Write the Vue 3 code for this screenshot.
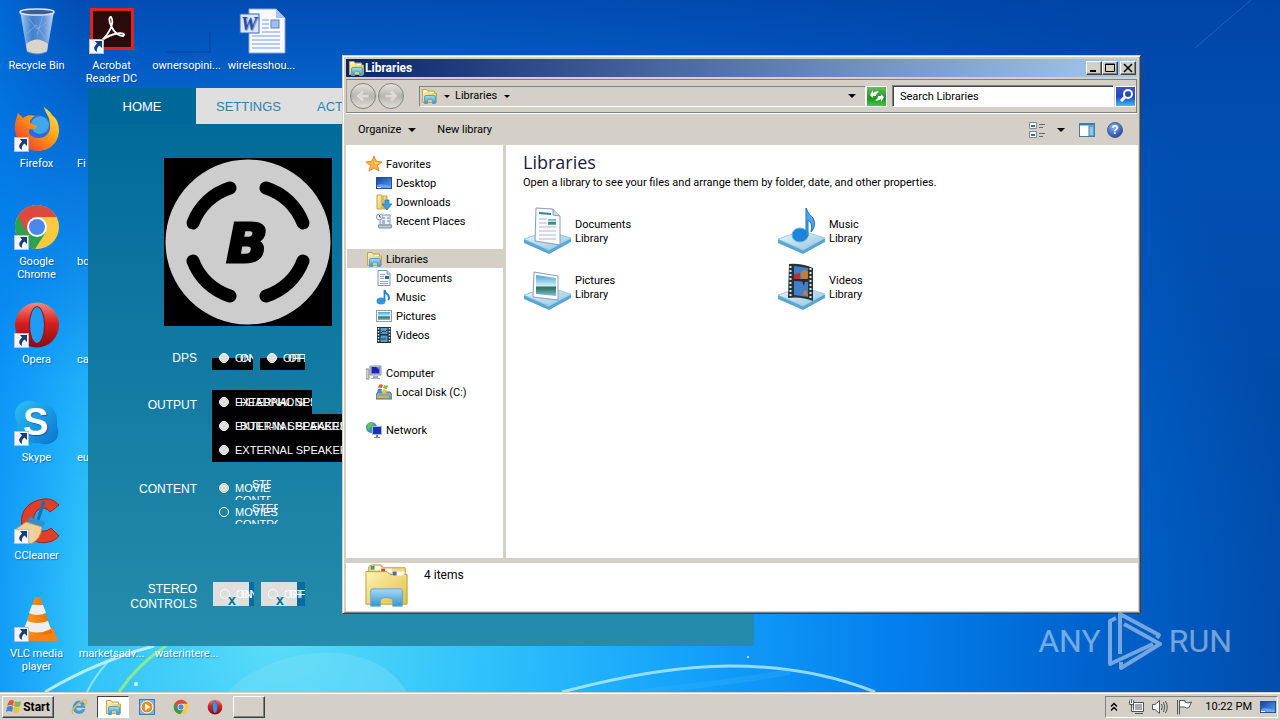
<template>
  <div class="screen">
    <svg class="sprite" width="0" height="0" aria-hidden="true">
      <defs>
        <linearGradient id="gGlass" x1="0" x2="1" y1="0" y2="0">
          <stop offset="0" stop-color="#cfe2f6" stop-opacity=".85" />
          <stop offset=".35" stop-color="#5f8fcf" stop-opacity=".7" />
          <stop offset=".7" stop-color="#7fa8dc" stop-opacity=".75" />
          <stop offset="1" stop-color="#dfeaf8" stop-opacity=".9" />
        </linearGradient>
        <linearGradient id="gFolder" x1="0" x2="1" y1="0" y2="1">
          <stop offset="0" stop-color="#fdf3b4" />
          <stop offset="1" stop-color="#e3bd45" />
        </linearGradient>
        <linearGradient id="gBlue" x1="0" x2="0" y1="0" y2="1">
          <stop offset="0" stop-color="#a9dbf6" />
          <stop offset="1" stop-color="#3593d0" />
        </linearGradient>
        <linearGradient id="gScreen" x1="0" x2="1" y1="0" y2="1">
          <stop offset="0" stop-color="#123fa8" />
          <stop offset="1" stop-color="#5aa4ee" />
        </linearGradient>
        <linearGradient id="gSky" x1="0" x2="0" y1="0" y2="1">
          <stop offset="0" stop-color="#4fa3dc" />
          <stop offset=".5" stop-color="#c8ebf2" />
          <stop offset=".6" stop-color="#2f6d5b" />
          <stop offset="1" stop-color="#7cc3d8" />
        </linearGradient>
        <linearGradient id="gFox" x1="1" x2="0" y1="0" y2="1">
          <stop offset="0" stop-color="#fff04a" />
          <stop offset=".45" stop-color="#ff9a16" />
          <stop offset="1" stop-color="#e5233c" />
        </linearGradient>
        <linearGradient id="gOpera" x1="0" x2="0" y1="0" y2="1">
          <stop offset="0" stop-color="#f38a80" />
          <stop offset=".45" stop-color="#d8201f" />
          <stop offset="1" stop-color="#8c0a0c" />
        </linearGradient>
        <linearGradient id="gSkype" x1="0" x2="1" y1="0" y2="1">
          <stop offset="0" stop-color="#2cc0f5" />
          <stop offset="1" stop-color="#0a73cf" />
        </linearGradient>
        <linearGradient id="gCone" x1="0" x2="1" y1="0" y2="0">
          <stop offset="0" stop-color="#ff9c2a" />
          <stop offset="1" stop-color="#e96a00" />
        </linearGradient>
        <linearGradient id="gTray" x1="0" x2="1" y1="0" y2="1">
          <stop offset="0" stop-color="#f1f8fc" />
          <stop offset="1" stop-color="#8fc2e0" />
        </linearGradient>
        <radialGradient id="gHelp" cx=".4" cy=".3" r=".8">
          <stop offset="0" stop-color="#8fb4ee" />
          <stop offset="1" stop-color="#1538a2" />
        </radialGradient>
      </defs>

      <symbol id="bin" viewBox="0 0 48 48">
        <path d="M7 4L14 45Q24 50 34 45L41 4Z" fill="url(#gGlass)" />
        <path d="M13 37Q24 28 35 37L34 44Q24 49 14 44Z" fill="#d9d4cc" />
        <path d="M16 12l8 10 9-6M15 26l8-8 10 14M30 8l-6 20" stroke="#a9c8ef" fill="none" opacity=".4" />
        <ellipse cx="24" cy="5" rx="17" ry="3" fill="#3b5d94" stroke="#dde8f5" stroke-width="1.5" />
      </symbol>
      <symbol id="acrobat" viewBox="0 0 48 48">
        <rect x="2" y="1" width="44" height="42" fill="#e2231a" />
        <rect x="5" y="4" width="38" height="36" fill="#2b0a0c" />
        <path d="M13 34C21 27 27 16 23 10C18 10 25 29 35 29C40 26 27 23 13 34" fill="none" stroke="#fff" stroke-width="1.8" />
      </symbol>
      <symbol id="blank" viewBox="0 0 48 48">
        <path d="M3 45H47V25" fill="none" stroke="#0a3478" opacity=".55" />
      </symbol>
      <symbol id="word" viewBox="0 0 48 48">
        <path d="M11 2H38L47 11V46H11Z" fill="#f6f9ff" stroke="#8aa6d8" />
        <path d="M38 2V11H47Z" fill="#aac1ee" />
        <path d="M24 13h7M24 17h7M24 21h7M24 25h18M14 29h28M14 33h28M14 37h28M14 41h28" stroke="#7d9cd4" />
        <rect x="33" y="13" width="8" height="8" fill="#a5bde9" stroke="#5f81c7" />
        <rect x="2" y="7" width="19" height="19" fill="#dbe6fa" stroke="#3a62b8" />
        <text x="3" y="23" class="svg-serif" font-size="18" font-weight="700" font-style="italic" fill="#214fae">W</text>
      </symbol>
      <symbol id="firefox" viewBox="0 0 48 48">
        <circle cx="24" cy="26" r="16" fill="#2c6bd8" />
        <circle cx="27" cy="20" r="9" fill="#3fa7ea" />
        <path d="M31 2C32 8 37 11 37 20C38 28 32 34 24 33C17 32 14 27 17 24C20 25 23 24 24 21L17 18C17 14 20 12 22 11C16 9 12 11 10 13L5 8C3 15 1 18 2 26C4 38 14 46 25 46C37 46 46 37 46 25C46 17 42 12 39 10C38 7 33 4 31 2Z" fill="url(#gFox)" />
      </symbol>
      <symbol id="chrome" viewBox="0 0 48 48">
        <circle cx="24" cy="24" r="22" fill="#fbc93d" />
        <path d="M24 24L5 13A22 22 0 0 0 22 46L33 29Z" fill="#2da150" />
        <path d="M5 13A22 22 0 0 1 43 13L43 14H24L14 30Z" fill="#dc4a3d" />
        <circle cx="24" cy="24" r="10" fill="#fff" />
        <circle cx="24" cy="24" r="8" fill="#4a88ee" />
      </symbol>
      <symbol id="opera" viewBox="0 0 48 48">
        <ellipse cx="24" cy="24" rx="22" ry="22.5" fill="url(#gOpera)" />
        <ellipse class="hole" cx="24" cy="24" rx="7.5" ry="18.5" stroke="#8c1414" />
      </symbol>
      <symbol id="skype" viewBox="0 0 48 48">
        <path d="M4 8Q12-2 24 4Q46 4 44 26Q48 38 40 43Q34 47 26 44Q4 46 4 24Q0 14 4 8Z" fill="url(#gSkype)" />
        <text x="10" y="36" class="svg-sans" font-size="38" font-weight="700" fill="#fff">S</text>
      </symbol>
      <symbol id="ccleaner" viewBox="0 0 48 48">
        <path d="M46 8Q38-1 26 3C10 7 5 22 11 34C17 48 38 49 46 39L38 31Q30 38 23 30Q17 18 26 12Q32 9 37 15Z" fill="#de3f28" stroke="#9e2318" />
        <path d="M31 4L25 23" stroke="#186fb2" stroke-width="3" />
        <path d="M17 20L32 25L30 31L13 27Z" fill="#2a93cf" />
        <path d="M13 25L29 30Q28 42 18 47Q8 42 3 32Z" fill="#f1cf98" stroke="#c89452" />
      </symbol>
      <symbol id="vlc" viewBox="0 0 48 48">
        <path d="M11 33H40L45 46H3Z" fill="#f58216" />
        <path d="M22 2H27L39 38Q24 44 10 38Z" fill="url(#gCone)" />
        <path d="M19 10H30L33 18Q24 22 16 18ZM14 26Q24 30 35 26L38 34Q24 41 11 34Z" fill="#eee" />
      </symbol>
      <symbol id="folder" viewBox="0 0 48 48">
        <path d="M5 4Q6 2 8 2H18L20 5H43V16H5Z" fill="#f2dc80" stroke="#bd9b38" />
        <rect x="7" y="3" width="10" height="4" fill="#fff" />
        <rect x="7" y="3" width="4" height="4" fill="#4d9b57" />
        <rect x="17" y="6" width="12" height="4" fill="#fff" />
        <rect x="18" y="6" width="4" height="4" fill="#d6432f" />
        <path d="M2 9H24L27 12H45V43H2Z" fill="url(#gFolder)" stroke="#c49d36" />
        <rect x="30" y="9" width="12" height="4" fill="#fff" />
        <rect x="30" y="9" width="4" height="4" fill="#4268b0" />
        <path d="M7 29Q7 27 9 27H38Q40 27 40 29V45H30V38Q23 34 17 38V45H7Z" fill="url(#gBlue)" stroke="#5aa8d6" />
      </symbol>
      <!-- simplified folder for 16px use -->
      <symbol id="folder-small" viewBox="0 0 16 16">
        <path d="M1.500 1.500H6L7 3H13.500V5H15.500V14.500H1.500Z" fill="url(#gFolder)" stroke="#c9a544" />
        <path d="M3 3h3M9 4.500h4" stroke="#fff" />
        <path d="M3.500 15.500V9Q3.500 7.500 5 7.500H12Q14.500 7.500 14.500 9V15.500H11.500V12Q9 10 6.500 12V15.500Z" fill="url(#gBlue)" stroke="#4fa4d4" />
      </symbol>
      <symbol id="star" viewBox="0 0 16 16">
        <path d="M8 0L10 5L16 6L11.500 9.500L13 15L8 12L3 15L4.500 9.500L0 6L6 5Z" fill="#ffb437" stroke="#dc7418" stroke-width=".8" />
        <path d="M8 3L9 6L13 7L9 8Z" fill="#fff0a0" />
      </symbol>
      <symbol id="desktop" viewBox="0 0 16 16">
        <rect x=".5" y="2.500" width="15" height="11" fill="url(#gScreen)" stroke="#23508e" />
        <path d="M1 10Q7 8 15 12V13H1Z" fill="#79c0f5" opacity=".6" />
        <path d="M1 12.500H5" stroke="#fff" />
      </symbol>
      <symbol id="downloads" viewBox="0 0 16 16">
        <path d="M1 1H6V15H1ZM7 2H11V15H7Z" fill="url(#gFolder)" stroke="#c6a03d" />
        <path d="M9 6H13V10H16L11 16L6 10H9Z" fill="#3aa2e2" stroke="#1b6cb0" stroke-width=".7" />
      </symbol>
      <symbol id="recent" viewBox="0 0 16 16">
        <path d="M4 2H14V12H4Z" fill="#e8f1f8" stroke="#8498a8" />
        <path d="M6 5h3M11 5h2M6 8h3M11 8h2M6 10h3" stroke="#4486b4" />
        <path d="M2 12H16L15 15H3Z" fill="#bccad4" stroke="#80909c" />
        <circle cx="3.500" cy="4" r="3" fill="#fff" stroke="#8798a4" />
        <path d="M3.500 2V4H5" stroke="#456" fill="none" />
      </symbol>
      <symbol id="document" viewBox="0 0 16 16">
        <path d="M2 .5H11L14 3.500V15.500H2Z" fill="#fbfdff" stroke="#8096b2" />
        <path d="M11 .5V4H14" fill="#cfdcec" stroke="#8096b2" />
        <path d="M4 4.500h5M4 6.500h4M4 8.500h4M4 11.500h8M4 13.500h8" stroke="#8aa4c8" />
        <rect x="9" y="6" width="4" height="3" fill="#315f9f" />
      </symbol>
      <symbol id="music" viewBox="0 0 16 16">
        <ellipse cx="5" cy="12" rx="4.500" ry="3.500" fill="#2c98df" />
        <path d="M8.500 12V1Q9 4 12 6Q14 9 12 11" fill="none" stroke="#2582c8" stroke-width="1.800" />
      </symbol>
      <symbol id="picture" viewBox="0 0 16 16">
        <rect x=".5" y="2.500" width="15" height="11" fill="#fff" stroke="#8aa0b0" />
        <rect x="2" y="4" width="12" height="8" fill="url(#gSky)" />
      </symbol>
      <symbol id="video" viewBox="0 0 16 16">
        <rect x="1" y="0" width="14" height="16" fill="#22303c" />
        <path d="M2.500 1V16M13.500 1V16" stroke="#e6eef2" stroke-width="1.500" stroke-dasharray="1.500 1.500" />
        <path d="M4.500 1H11.500V7H4.500ZM4.500 8.500H11.500V15H4.500Z" fill="#579cc8" />
        <path d="M5 6l2-2 2 1 2-2M5 12h5" stroke="#1f425e" fill="none" />
      </symbol>
      <symbol id="computer" viewBox="0 0 16 16">
        <path d="M0 4H3V14H0Z" fill="#cfd4d8" stroke="#8a9196" />
        <path d="M4 1H15V10H4Z" fill="#c9cfd8" stroke="#8a93a4" />
        <path d="M5.500 2H13.500V8.500H5.500Z" fill="#1b27b4" />
        <path d="M10 2H13.500V5Z" fill="#6a86ee" />
        <path d="M7 11h5v2h2v1H5v-1h2Z" fill="#aab0b6" />
      </symbol>
      <symbol id="disk" viewBox="0 0 16 16">
        <path d="M0 11L2 8H14L16 11V15H0Z" fill="#8fa6ae" stroke="#586e78" />
        <path d="M1 12H12V14H1Z" fill="#cfb64a" />
        <circle cx="14" cy="13" r="1" fill="#3fd13a" />
        <path d="M3 1Q5-.5 7 1L6 4Q4 3 2 4Z" fill="#e8592b" />
        <path d="M8 1Q10 2 12 1L11 5Q9 5 7 4Z" fill="#7abf3e" />
        <path d="M2 5Q4 4 6 5L5 9Q3 8 1 9Z" fill="#3a8bdc" />
        <path d="M7 5Q9 6 11 6L10 9Q8 10 6 9Z" fill="#f7c331" />
      </symbol>
      <symbol id="network" viewBox="0 0 16 16">
        <circle cx="5.500" cy="5.500" r="5.500" fill="#3d93cf" />
        <path d="M2 2Q6-1 8 2L5 5L3 8L1 6ZM6 6L9 5V9Z" fill="#63c25a" />
        <rect x="6.500" y="4.500" width="9" height="8" fill="#1c30c4" stroke="#a8b4d8" />
        <path d="M10 13h2v2h2v1H8v-1h2Z" fill="#6f80b4" />
      </symbol>
      <symbol id="tray-base" viewBox="0 0 48 48">
        <path d="M1 32L26 42L48 31V35L26 47L1 36Z" fill="#58a6d2" />
        <path d="M1 32L25 24L48 31L26 43Z" fill="url(#gTray)" stroke="#9bcbe4" />
      </symbol>
      <symbol id="lib-documents" viewBox="0 0 48 48">
        <use href="#tray-base" width="48" height="48" />
        <path d="M13 1L30 2L37 9V38L12 34Z" fill="#f8fbff" stroke="#8a9cb8" />
        <path d="M30 2V8L37 9" fill="#cddbea" stroke="#8a9cb8" />
        <path d="M16 6l12 1" stroke="#3f7d96" stroke-width="2" />
        <path d="M16 12h8M16 16h8M16 20h17M16 24h17M16 28h17M16 32h17" stroke="#b9b6cf" />
        <rect x="25" y="12" width="8" height="6" fill="url(#gSky)" />
      </symbol>
      <symbol id="lib-music" viewBox="0 0 48 48">
        <use href="#tray-base" width="48" height="48" />
        <ellipse cx="23" cy="28" rx="8" ry="7" fill="#1c84da" stroke="#63b6ee" />
        <path d="M29 29V1Q31 7 36 11Q40 19 34 25Q36 15 31 13V29Z" fill="#4aa8ea" stroke="#1c70ba" />
      </symbol>
      <symbol id="lib-pictures" viewBox="0 0 48 48">
        <use href="#tray-base" width="48" height="48" />
        <path d="M11 9L35 13V37L10 34Z" fill="#fff" stroke="#8d9cb0" />
        <path d="M13 12L33 15V33L13 31Z" fill="url(#gSky)" />
      </symbol>
      <symbol id="lib-videos" viewBox="0 0 48 48">
        <use href="#tray-base" width="48" height="48" />
        <path d="M12 1Q24 0 36 5V38Q24 33 11 35Z" fill="#26333a" />
        <path d="M13.500 3V34M33.500 5V36" stroke="#dfe8d8" stroke-width="2" stroke-dasharray="2 2" />
        <path d="M17 3L31 5V17L17 16ZM17 18L31 19V34L17 32Z" fill="#3f7fcb" />
        <path d="M17 11L23 10V16H17Z" fill="#b8302a" />
        <path d="M25 16Q22 7 28 7Q33 9 30 16ZM26 29Q30 24 31 33L26 32Z" fill="#c97a30" />
        <path d="M17 16H31V18H28L27 23L25 18H17Z" fill="#33222a" />
      </symbol>
      <symbol id="ie" viewBox="0 0 16 16">
        <path d="M12.500 8.500H4.500Q5 12 8 12Q10 12 11 10.500H14Q12 15 8 14.500Q2 14 2 8Q3 2 8 2Q14 2 14 8.500ZM5 7H11Q10 4 8 4Q5.500 4 5 7Z" fill="#3aa0e4" stroke="#2a86cc" stroke-width=".5" />
        <path d="M2 15Q-1 12 7 5Q13 0 15 1Q17 3 13 7" fill="none" stroke="#e9b93a" stroke-width="1.300" />
      </symbol>
      <symbol id="wmp" viewBox="0 0 16 16">
        <rect x=".5" y=".5" width="15" height="15" fill="#79b4e2" stroke="#3c7ab2" />
        <circle cx="8" cy="8" r="6" fill="#f18a1c" stroke="#fff" />
        <path d="M6 4.500L11.500 8L6 11.500Z" fill="#fff" />
      </symbol>
      <symbol id="flag-win" viewBox="0 0 16 16">
        <path d="M3 2Q6 0 8 2L7 7Q4 5 1 7Z" fill="#e4572a" />
        <path d="M9 2Q12 4 15 2L14 7Q11 9 8 7Z" fill="#7fbb42" />
        <path d="M1 8Q4 6 7 8L6 13Q3 11 0 13Z" fill="#3c86d4" />
        <path d="M8 8Q11 10 14 8L13 13Q10 15 7 13Z" fill="#f4c02f" />
      </symbol>
    </svg>

    <main class="desktop">
      <svg class="wallpaper" viewBox="0 0 1280 692" preserveAspectRatio="none" aria-hidden="true">
        <defs>
          <radialGradient id="wGlow" gradientUnits="userSpaceOnUse" cx="280" cy="640" r="1020">
            <stop offset="0" stop-color="#5adcf8" />
            <stop offset=".2" stop-color="#2fc2fa" />
            <stop offset=".4" stop-color="#14a2fb" />
            <stop offset=".6" stop-color="#0480ee" />
            <stop offset=".8" stop-color="#0062cc" />
            <stop offset="1" stop-color="#004ba8" />
          </radialGradient>
          <linearGradient id="wTop" x1="0" x2="0" y1="0" y2="1">
            <stop offset="0" stop-color="#0142a6" stop-opacity=".8" />
            <stop offset=".25" stop-color="#0153bc" stop-opacity=".45" />
            <stop offset=".55" stop-color="#0153bc" stop-opacity="0" />
          </linearGradient>
          <linearGradient id="wLeft" x1="0" x2="1" y1="0" y2="0">
            <stop offset="0" stop-color="#0084f4" stop-opacity=".5" />
            <stop offset="1" stop-color="#0084f4" stop-opacity="0" />
          </linearGradient>
        </defs>
        <rect width="1280" height="692" fill="url(#wGlow)" />
        <rect width="1280" height="692" fill="url(#wTop)" />
        <rect width="80" height="692" fill="url(#wLeft)" />
        <path d="M1195 48L1280 -25" stroke="#2f83d2" opacity=".5" />
        <path d="M45 692Q95 662 154 646" stroke="#c9f3ff" stroke-width="3" fill="none" opacity=".85" />
        <path d="M87 692Q98 670 116 654" stroke="#b4f0f4" stroke-width="2" fill="none" opacity=".7" />
        <path d="M119 692Q138 664 166 646" stroke="#9bf078" stroke-width="3" fill="none" opacity=".85" />
        <path d="M228 692C265 650 370 630 407 692Z" fill="#8ae4f8" opacity=".3" />
        <path d="M562 692Q660 666 730 666Q810 666 875 692" stroke="#b8ecff" stroke-width="3" fill="none" opacity=".8" />
        <path d="M640 692Q720 684 790 672" stroke="#4bbcff" stroke-width="6" fill="none" opacity=".2" />
        <circle cx="136" cy="684" r="2" fill="#d5f8ff" />
        <circle cx="748" cy="657" r="1" fill="#d5f8ff" />
      </svg>

      <ul class="shortcuts">
        <li v-for="s in shortcuts" :key="s.label" :class="{ covered: s.covered }">
          <a href="#" class="shortcut">
            <span class="shortcut-icon">
              <svg v-if="s.icon"><use :href="'#' + s.icon" /></svg>
              <svg v-if="s.link" class="arrow" viewBox="0 0 15 15">
                <rect x=".5" y=".5" width="14" height="14" fill="#f3f6fa" stroke="#b6bfca" />
                <path d="M6 2H13V9L10.500 6.500Q7 9 8 13Q2 10 8 4.500Z" fill="#173d7d" />
              </svg>
            </span>
            <span class="shortcut-label">{{ s.label }}</span>
          </a>
        </li>
      </ul>

      <section class="panel">
        <nav class="panel-nav">
          <a href="#" class="active">HOME</a>
          <a href="#">SETTINGS</a>
          <a href="#">ACTIONS</a>
        </nav>
        <svg class="logo" viewBox="0 0 168 168">
          <rect width="168" height="168" />
          <circle cx="84" cy="84" r="82.500" fill="#cdcdcd" />
          <g fill="none" stroke="#000" stroke-width="13" stroke-linecap="round">
            <path d="M29 65A58 58 0 0 1 66 30" />
            <path d="M102 30A58 58 0 0 1 139 65" />
            <path d="M139 103A58 58 0 0 1 102 138" />
            <path d="M66 138A58 58 0 0 1 29 103" />
          </g>
          <text x="83" y="104" text-anchor="middle" class="logo-letter">B</text>
        </svg>
        <div class="settings">
          <fieldset v-for="g in groups" :key="g.title" :class="['group', g.kind]">
            <legend>{{ g.title }}</legend>
            <div class="options">
              <label v-for="(o, i) in g.options" :key="i" class="option">
                <input type="radio" :name="g.kind" :checked="i === 0" />
                <span>{{ o.text }}</span>
                <span class="ghost">{{ o.ghost }}</span>
                <span v-if="o.below" class="below">{{ o.below }}</span>
                <b v-if="g.kind === 'stereo'">x</b>
              </label>
            </div>
          </fieldset>
        </div>
      </section>

      <section class="window">
        <header class="titlebar">
          <svg class="i16"><use href="#folder-small" /></svg>
          <h1>Libraries</h1>
          <button class="cap" aria-label="Minimize"><svg viewBox="0 0 12 10"><path d="M2 8H8" stroke="#000" stroke-width="2" /></svg></button>
          <button class="cap" aria-label="Maximize"><svg viewBox="0 0 12 10"><path d="M1.500 1V8.500H10.500V1ZM1 1.500H11" stroke="#000" fill="none" /></svg></button>
          <button class="cap close" aria-label="Close"><svg viewBox="0 0 12 10"><path d="M2 1L10 9M10 1L2 9" stroke="#000" stroke-width="1.600" /></svg></button>
        </header>

        <div class="address-row">
          <div class="travel">
            <button aria-label="Back"><svg viewBox="0 0 24 24"><path d="M18 12H7M12 7L7 12L12 17" /></svg></button>
            <button aria-label="Forward"><svg viewBox="0 0 24 24"><path d="M6 12H17M12 7L17 12L12 17" /></svg></button>
          </div>
          <div class="address">
            <svg class="i16"><use href="#folder-small" /></svg>
            <button class="plain" aria-label="Locations"><i class="caret"></i></button>
            <button class="plain">Libraries<i class="caret"></i></button>
            <button class="plain history" aria-label="History"><i class="caret big"></i></button>
          </div>
          <button class="refresh" aria-label="Refresh">
            <svg viewBox="0 0 18 18"><path d="M2 8L5 3V6Q9 3 11 5Q8 6 8 9H5V11ZM16 10L13 15V12Q9 15 7 13Q10 12 10 9H13V7Z" fill="#fff" /></svg>
          </button>
          <input class="search" type="text" placeholder="Search Libraries" aria-label="Search Libraries" />
          <button class="find" aria-label="Search">
            <svg viewBox="0 0 18 18"><circle cx="11" cy="7" r="4" fill="none" stroke="#fff" stroke-width="2" /><path d="M8 10L4 14" stroke="#fff" stroke-width="3" /></svg>
          </button>
        </div>

        <div class="toolbar">
          <button class="plain organize">Organize<i class="caret big"></i></button>
          <button class="plain">New library</button>
          <span class="spacer"></span>
          <button class="plain" aria-label="Change view">
            <svg class="i16" viewBox="0 0 16 16">
              <path d="M.5 .5H7.500V6.500H.5ZM.5 9.500H7.500V15.500H.5Z" fill="#fff" stroke="#7f8b91" />
              <path d="M2 4h4M2 13h4" stroke="#2f70ae" stroke-width="2" />
              <path d="M10 2.500h6M10 5.500h4M10 11.500h6M10 14.500h4" stroke="#686868" />
            </svg>
          </button>
          <button class="plain view-more" aria-label="More views"><i class="caret big"></i></button>
          <button class="plain" aria-label="Preview pane">
            <svg class="i16" viewBox="0 0 16 16"><rect x=".5" y="1.500" width="15" height="13" fill="#fff" stroke="#3a7fae" /><path d="M0 2.500H16" stroke="#3a7fae" stroke-width="2" /><rect x="10" y="4" width="5" height="10" fill="#8cc8ea" stroke="#3a7fae" /></svg>
          </button>
          <button class="plain" aria-label="Help">
            <svg class="i16" viewBox="0 0 16 16"><circle cx="8" cy="8" r="7.500" fill="url(#gHelp)" stroke="#4a5f98" /><text x="8" y="12" text-anchor="middle" class="svg-sans" font-size="12" font-weight="700" fill="#fff">?</text></svg>
          </button>
        </div>

        <div class="body">
          <nav class="tree">
            <ul v-for="branch in tree" :key="branch.label">
              <li :class="{ selected: branch.selected }">
                <a href="#"><svg class="i16"><use :href="'#' + branch.icon" /></svg><span>{{ branch.label }}</span></a>
              </li>
              <li v-for="leaf in branch.items" :key="leaf.label" class="leaf">
                <a href="#"><svg class="i16"><use :href="'#' + leaf.icon" /></svg><span>{{ leaf.label }}</span></a>
              </li>
            </ul>
          </nav>
          <div class="content">
            <h2>Libraries</h2>
            <p>Open a library to see your files and arrange them by folder, date, and other properties.</p>
            <div class="libraries">
              <a v-for="lib in libraries" :key="lib.label" href="#" class="library">
                <svg><use :href="'#' + lib.icon" /></svg>
                <span>{{ lib.label }}<br />Library</span>
              </a>
            </div>
          </div>
        </div>

        <footer class="details">
          <svg><use href="#folder" /></svg>
          <span>4 items</span>
        </footer>
      </section>

      <div class="watermark">
        <span>ANY</span>
        <svg viewBox="0 0 56 62" fill="none" stroke="currentColor" stroke-width="4" stroke-linejoin="round">
          <path d="M9 8L3 11V54L46 34" />
          <path d="M13 44V4L52 25L50 28" />
          <path d="M17 14L53 34L14 58V52" />
        </svg>
        <span>RUN</span>
      </div>
    </main>

    <footer class="taskbar">
      <button class="raised start"><svg class="i16"><use href="#flag-win" /></svg>Start</button>
      <button v-for="t in tasks" :key="t.icon" :class="['task', { pressed: t.active }]" :aria-label="t.icon">
        <svg class="i16"><use :href="'#' + t.icon" /></svg>
      </button>
      <button class="raised blank-task" aria-label="Untitled task"></button>
      <span class="spacer"></span>
      <div class="tray">
        <svg class="chevron" viewBox="0 0 8 10"><path d="M1 4.500L4 1.500L7 4.500M1 8.500L4 5.500L7 8.500" fill="none" stroke="#000" stroke-width="1.400" /></svg>
        <svg class="i16" viewBox="0 0 16 16" fill="#fff" stroke="#555"><path d="M5.500 3.500H15.500V12.500H5.500Z" /><path d="M7 5H14V11H7Z" fill="#aaa" stroke="none" /><path d="M7 14.500H15M1.500 1.500V5.500H5.500V1.500M3.500 0V4M3.500 6V12.500H6" /></svg>
        <svg class="i16" viewBox="0 0 16 16" fill="#fff" stroke="#555"><path d="M.5 5.500H3L7.500 1.500V14.500L3 10.500H.5Z" /><path d="M9.500 5Q11 8 9.500 11M11.500 3Q14 8 11.500 13M13.500 2Q17 8 13.500 14" fill="none" /></svg>
        <svg class="i16" viewBox="0 0 16 16" fill="#fff" stroke="#555"><path d="M1.500 1V15.500M3.500 1V15.500" /><path d="M3.500 1.500H9V3Q12 5 15.500 3L13 8.500Q11 10 8.500 8H3.500Z" /></svg>
        <time>10:22 PM</time>
        <svg class="i16"><use href="#desktop" /></svg>
      </div>
    </footer>
  </div>
</template>

<script setup>
const shortcuts = [
  { label: 'Recycle Bin', icon: 'bin' },
  { label: 'Firefox', icon: 'firefox', link: true },
  { label: 'Google Chrome', icon: 'chrome', link: true },
  { label: 'Opera', icon: 'opera', link: true },
  { label: 'Skype', icon: 'skype', link: true },
  { label: 'CCleaner', icon: 'ccleaner', link: true },
  { label: 'VLC media player', icon: 'vlc', link: true },
  { label: 'Acrobat Reader DC', icon: 'acrobat', link: true },
  { label: 'Fi', covered: true },
  { label: 'bo', covered: true },
  { label: 'ca', covered: true },
  { label: 'eu', covered: true },
  { label: '', covered: true },
  { label: 'marketsadv...' },
  { label: 'ownersopini...', icon: 'blank' },
  { label: ' ' },
  { label: '  ' },
  { label: '   ' },
  { label: '    ' },
  { label: '     ' },
  { label: 'waterintere...' },
  { label: 'wirelesshou...', icon: 'word' },
]

const groups = [
  {
    title: 'DPS',
    kind: 'dps',
    options: [
      { text: 'ON', ghost: 'ON' },
      { text: 'OFF', ghost: 'OFF' },
    ],
  },
  {
    title: 'OUTPUT',
    kind: 'output',
    options: [
      { text: 'EXTERNAL SPEAKERS', ghost: 'HEADPHONES' },
      { text: 'EXTERNAL SPEAKERS', ghost: 'BUILT-IN SPEAKERS' },
      { text: 'EXTERNAL SPEAKERS', ghost: '' },
    ],
  },
  {
    title: 'CONTENT',
    kind: 'content-kind',
    options: [
      { text: 'MOVIES', ghost: 'STEREO', below: 'CONTROLS' },
      { text: 'MOVIES', ghost: 'STEREO', below: 'CONTROLS' },
    ],
  },
  {
    title: 'STEREO CONTROLS',
    kind: 'stereo',
    options: [
      { text: 'ON', ghost: 'ON' },
      { text: 'OFF', ghost: 'OFF' },
    ],
  },
]

const tree = [
  {
    label: 'Favorites',
    icon: 'star',
    items: [
      { label: 'Desktop', icon: 'desktop' },
      { label: 'Downloads', icon: 'downloads' },
      { label: 'Recent Places', icon: 'recent' },
    ],
  },
  {
    label: 'Libraries',
    icon: 'folder-small',
    selected: true,
    items: [
      { label: 'Documents', icon: 'document' },
      { label: 'Music', icon: 'music' },
      { label: 'Pictures', icon: 'picture' },
      { label: 'Videos', icon: 'video' },
    ],
  },
  { label: 'Computer', icon: 'computer', items: [{ label: 'Local Disk (C:)', icon: 'disk' }] },
  { label: 'Network', icon: 'network', items: [] },
]

const libraries = [
  { label: 'Documents', icon: 'lib-documents' },
  { label: 'Music', icon: 'lib-music' },
  { label: 'Pictures', icon: 'lib-pictures' },
  { label: 'Videos', icon: 'lib-videos' },
]

const tasks = [
  { icon: 'ie' },
  { icon: 'folder-small', active: true },
  { icon: 'wmp' },
  { icon: 'chrome' },
  { icon: 'opera' },
]
</script>

<style>
body {
  margin: 0;
  overflow: hidden;
}
</style>

<style scoped>
.screen {
  display: flex;
  flex-direction: column;
  height: 100vh;
  font: 11px/14px Tahoma, Roboto, sans-serif;
  color: #000;
}

.sprite {
  position: absolute;
}

.svg-serif {
  font-family: "Liberation Serif", serif;
}

.svg-sans {
  font-family: "Liberation Sans", sans-serif;
}

.hole {
  fill: #1f9cf4;
}

a {
  color: inherit;
  text-decoration: none;
}

ul {
  list-style: none;
  margin: 0;
  padding: 0;
}

button {
  font: inherit;
  color: inherit;
  padding: 0;
  border: 0;
  background: none;
  display: flex;
  align-items: center;
  justify-content: center;
}

.i16 {
  width: 16px;
  height: 16px;
  flex: none;
}

.spacer {
  flex: 1;
}

.desktop {
  position: relative;
  flex: 1;
  overflow: hidden;
}

.wallpaper {
  position: absolute;
  inset: 0;
  width: 100%;
  height: 100%;
}

/* desktop icons */
.shortcuts {
  position: relative;
  display: grid;
  grid-auto-flow: column;
  grid-template-rows: repeat(7, 98px);
  grid-auto-columns: 75px;
  justify-content: start;
  margin-left: -1px;
}

.shortcut {
  display: flex;
  flex-direction: column;
  align-items: center;
  padding-top: 7px;
  color: #fff;
  text-align: center;
  line-height: 13px;
  text-shadow: 1px 1px 1px #00306a80;
}

.shortcut-icon {
  position: relative;
  width: 48px;
  height: 48px;
  margin-bottom: 4px;
}

.shortcut-icon svg {
  width: 48px;
  height: 48px;
}

.shortcut-icon .arrow {
  position: absolute;
  left: 1px;
  bottom: 1px;
  width: 15px;
  height: 15px;
}

.covered .shortcut {
  align-items: flex-start;
  padding-left: 3px;
}

/* player panel */
.panel {
  position: absolute;
  left: 88px;
  top: 88px;
  bottom: 46px;
  width: 52%;
  background: linear-gradient(#006898, #127aa2 50%, #268cac);
  color: #fff;
  font-family: "Liberation Sans", sans-serif;
  font-size: 12px;
  line-height: 15px;
}

.panel-nav {
  display: flex;
  height: 36px;
  background: #dfdfdf;
  color: #2a83ac;
  font-size: 13px;
}

.panel-nav a {
  display: flex;
  align-items: center;
  padding: 0 16px 0 20px;
}

.panel-nav .active {
  width: 108px;
  box-sizing: border-box;
  justify-content: center;
  padding: 0;
  background: #006898;
  color: #fff;
}

.logo {
  display: block;
  width: 168px;
  height: 168px;
  margin: 34px 0 20px 76px;
}

.logo-letter {
  font: italic 700 54px "DejaVu Sans", sans-serif;
  stroke: #000;
  stroke-width: 3px;
}

.group {
  display: flex;
  margin: 0;
  padding: 0;
  border: 0;
}

.group legend {
  float: left;
  width: 109px;
  padding: 0 0 0 40px;
  box-sizing: border-box;
  text-align: right;
}

.options {
  display: flex;
  margin-left: 15px;
}

.option {
  position: relative;
  display: flex;
  align-items: center;
  height: 24px;
  padding-left: 7px;
  overflow: hidden;
  white-space: nowrap;
  font-size: 11px;
}

.option input {
  appearance: none;
  width: 10px;
  height: 10px;
  margin: 0 6px 0 0;
  border: 1px solid #fff;
  border-radius: 50%;
  background: #dedede;
  flex: none;
}

.ghost,
.below {
  position: absolute;
  left: 28px;
}

.dps,
.output {
  min-height: 44px;
}

.dps legend {
  padding-top: 5px;
}

.dps .option {
  width: 34px;
  margin-right: 7px;
  background: linear-gradient(transparent 50%, #000 50%);
}

.dps .option + .option {
  width: 38px;
}

.output .options {
  flex-direction: column;
  align-items: flex-start;
}

.output legend {
  padding-top: 8px;
}

.output .option {
  background: #000;
}

.output .option:first-child {
  width: 93px;
}

.content-kind {
  padding-top: 14px;
  min-height: 106px;
}

.content-kind legend {
  padding-top: 6px;
}

.content-kind .options {
  flex-direction: column;
}

.content-kind .option {
  width: 52px;
}

.content-kind .option + .option {
  width: 59px;
}

.content-kind .ghost {
  left: 40px;
  top: 2px;
  line-height: 12px;
}

.below {
  left: 23px;
  top: 18px;
  line-height: 12px;
}

.content-kind .option + .option input {
  background: transparent;
}

.stereo .options {
  gap: 7px;
  margin-left: 16px;
}

.stereo .option {
  width: 34px;
  background: linear-gradient(90deg, #dfdfdf 36px, #066ba0 36px);
}

.stereo .option + .option {
  width: 37px;
}

.stereo b {
  position: absolute;
  left: 15px;
  bottom: 0;
  color: #066ba0;
  font-size: 14px;
  line-height: 12px;
}

/* explorer window */
.window {
  position: absolute;
  left: 342px;
  right: 139px;
  top: 55px;
  bottom: 78px;
  display: flex;
  flex-direction: column;
  box-sizing: border-box;
  padding: 2px;
  background: #d4d0c8;
  border: 1px solid;
  border-color: #d4d0c8 #404040 #404040 #d4d0c8;
  box-shadow: inset 1px 1px #fff, inset -1px -1px #808080;
}

.titlebar {
  display: flex;
  align-items: center;
  height: 18px;
  margin: 1px;
  padding: 0 1px 0 2px;
  background: linear-gradient(90deg, #0a246a, #a6caf0);
  color: #fff;
}

.titlebar h1 {
  flex: 1;
  margin: 0 0 0 1px;
  font-size: 12px;
  line-height: 14px;
}

.cap,
.raised {
  box-sizing: border-box;
  background: #d4d0c8;
  border: 1px solid;
  border-color: #fff #404040 #404040 #fff;
  box-shadow: inset -1px -1px #808080;
}

.cap {
  width: 16px;
  height: 14px;
}

.cap svg {
  width: 12px;
  height: 10px;
}

.cap.close {
  margin-left: 2px;
}

.address-row {
  display: flex;
  align-items: center;
  height: 32px;
  margin: 1px;
  padding-left: 3px;
  border: 1px solid;
  border-color: #808080 #808080 #808080 #a8a49c;
  box-shadow: 0 1px #fff;
}

.travel {
  display: flex;
  gap: 2px;
  margin-right: 15px;
}

.travel button {
  width: 26px;
  height: 26px;
  border: 1px solid #85837f;
  border-radius: 50%;
  background: linear-gradient(#e5e3df, #b8b5ae 50%, #e0deda);
}

.travel svg {
  width: 22px;
  height: 22px;
  flex: none;
  fill: none;
  stroke: #dddbd6;
  stroke-width: 3px;
}

.address {
  display: flex;
  align-items: center;
  flex: 1;
  height: 19px;
  padding-left: 1px;
  border: 1px solid;
  border-color: #808080 #fff #fff #808080;
}

.plain {
  height: 18px;
}

.caret {
  margin: 0 5px 0 7px;
  border: 3px solid transparent;
  border-top-color: #000;
  border-bottom: 0;
}

.caret.big {
  border-width: 4px 4px 0;
}

.history {
  margin-left: auto;
}

.history .caret {
  margin-right: 9px;
}

.refresh,
.find {
  width: 21px;
  height: 21px;
  flex: none;
  box-sizing: border-box;
  border: 1px solid #fff;
}

.refresh {
  margin-right: 5px;
  background: linear-gradient(#6cbb5f, #1a9226 60%, #45c740);
}

.find {
  margin-left: 1px;
  background: linear-gradient(#3d56c8, #2147c4 50%, #3fbdf4);
}

.refresh svg,
.find svg {
  width: 18px;
  height: 18px;
}

.search {
  width: 222px;
  height: 22px;
  box-sizing: border-box;
  padding: 0 7px;
  font: inherit;
  background: #fff;
  border: 1px solid;
  border-color: #808080 #fff #fff #808080;
  box-shadow: inset 1px 1px #404040;
}

.search::placeholder {
  color: #000;
  opacity: 1;
}

.toolbar {
  display: flex;
  align-items: center;
  height: 31px;
  padding: 0 15px 0 13px;
}

.organize {
  margin-right: 16px;
}

.toolbar .view-more {
  margin: 0 9px 0 5px;
}

.toolbar .plain + .plain:last-child {
  margin-left: 12px;
}

.body {
  display: flex;
  flex: 1;
  margin-left: 1px;
  min-height: 0;
  background: #fff;
}

.tree {
  width: 157px;
  flex: none;
  padding-top: 9px;
  border-right: 3px solid #d4d0c8;
}

.tree ul {
  margin-bottom: 19px;
}

.tree li {
  padding-left: 19px;
  margin-left: 1px;
}

.tree a {
  display: flex;
  align-items: center;
  gap: 4px;
  height: 19px;
}

.tree span,
.library span {
  padding-top: 2px;
}

.tree .leaf {
  padding-left: 29px;
}

.tree .selected {
  background: #d4d0c8;
}

.content {
  flex: 1;
  padding: 5px 17px;
}

.content h2 {
  margin: 0;
  font: 18px/24px "Open Sans", sans-serif;
  color: #1a1a40;
}

.content p {
  margin: 2px 0 17px;
}

.libraries {
  display: grid;
  grid-template-columns: repeat(2, 254px);
  grid-auto-rows: 56px;
}

.library {
  display: flex;
  align-items: center;
  gap: 4px;
  height: 48px;
}

.library svg {
  width: 48px;
  height: 48px;
}

.details {
  display: flex;
  height: 48px;
  margin-left: 1px;
  padding-left: 18px;
  border-top: 5px solid #d4d0c8;
  background: #fff;
}

.details svg {
  width: 46px;
  height: 46px;
}

.details span {
  margin: 5px 0 0 14px;
  font-size: 12px;
}

.watermark {
  position: absolute;
  right: 48px;
  bottom: 20px;
  display: flex;
  align-items: center;
  gap: 6px;
  color: #fff;
  opacity: .45;
  font: 32px/36px Roboto, sans-serif;
}

.watermark svg {
  width: 56px;
  height: 62px;
}

/* taskbar */
.taskbar {
  display: flex;
  align-items: center;
  height: 26px;
  padding: 1px 2px 0;
  background: #d4d0c8;
  border-top: 1px solid #d4d0c8;
  box-shadow: inset 0 1px #fff;
}

.raised {
  height: 22px;
}

.start {
  width: 52px;
  gap: 1px;
  margin-right: 9px;
  font-size: 12px;
  font-weight: 700;
}

.task {
  width: 32px;
  height: 22px;
  box-sizing: border-box;
  margin-right: 2px;
}

.task .hole {
  fill: #fff;
}

.pressed {
  background: #fff;
  border: 1px solid;
  border-color: #404040 #fff #fff #404040;
}

.blank-task {
  width: 32px;
}

.tray {
  display: flex;
  align-items: center;
  height: 20px;
  padding: 0 1px 0 4px;
  border: 1px solid;
  border-color: #808080 #fff #fff #808080;
}

.tray svg {
  margin-right: 8px;
}

.tray .chevron {
  width: 8px;
  height: 10px;
  margin-right: 10px;
}

.tray time {
  margin: 0 8px 0 5px;
}

.tray svg:last-child {
  margin: 0;
}
</style>
